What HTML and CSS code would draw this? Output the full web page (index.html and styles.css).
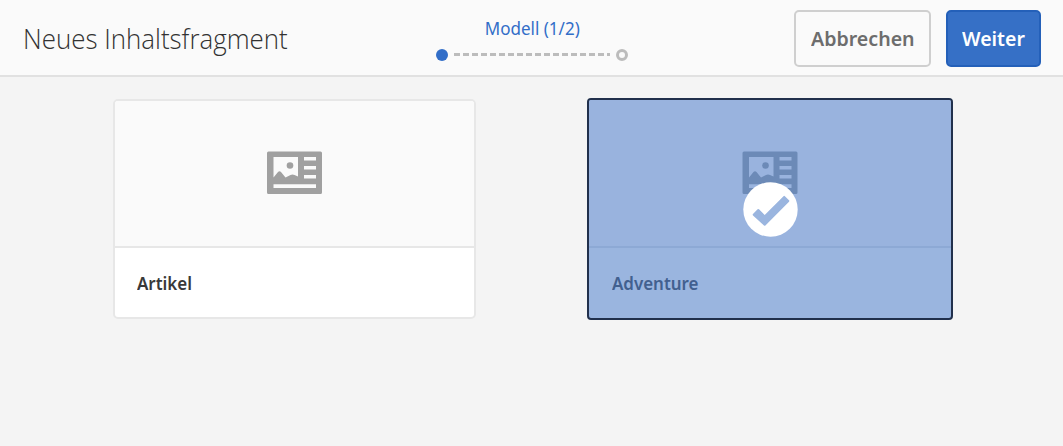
FILE: index.html
```html
<!DOCTYPE html>
<html lang="de">
<head>
<meta charset="utf-8">
<title>Neues Inhaltsfragment</title>
<link rel="stylesheet" href="styles.css">
</head>
<body>
<header class="bar">
  <h1 class="title"><span class="title-text">Neues Inhaltsfragment</span></h1>
  <div class="steps">
    <span class="step-label">Modell (1/2)</span>
    <svg class="track" width="194" height="14" viewBox="0 0 194 14">
      <circle cx="7" cy="7" r="6" fill="#326ec8"/>
      <path d="M19 6.5H175" stroke="#bcbcbc" stroke-width="3" stroke-dasharray="6 3"/>
      <circle cx="187" cy="7" r="4.5" fill="#fafafa" stroke="#bcbcbc" stroke-width="3"/>
    </svg>
  </div>
  <div class="actions">
    <button class="btn cancel"><span class="cancel-text">Abbrechen</span></button>
    <button class="btn next"><span class="next-text">Weiter</span></button>
  </div>
</header>
<main class="models">
  <article class="card">
    <div class="preview">
      <svg class="icon" width="55" height="43" viewBox="0 0 55 43">
        <path fill="currentColor" fill-rule="evenodd" d="M1.5 0.500H53.5Q55 0.500 55 2V41.5Q55 43 53.5 43H1.5Q0 43 0 41.5V2Q0 0.500 1.5 0.500ZM6.5 6V26.5L11 20.9Q12.500 19.500 14 20.900L18.500 26.500L23.500 23.900Q25.500 22.900 27.500 23.900L31 25.500V6ZM37 6V9.500H49V6ZM37 15V18.500H49V15ZM37 24V27.500H49V24ZM6.500 33.300V37H49V33.300Z"/>
        <circle cx="23" cy="14.500" r="3.300" fill="currentColor"/>
      </svg>
    </div>
    <div class="caption"><span class="artikel">Artikel</span></div>
  </article>
  <article class="card selected">
    <div class="preview">
      <svg class="icon" width="56" height="43" viewBox="-0.5 0 56 43">
        <path fill="currentColor" fill-rule="evenodd" d="M1.5 0.500H53.5Q55 0.500 55 2V41.5Q55 43 53.5 43H1.5Q0 43 0 41.5V2Q0 0.500 1.5 0.500ZM6.5 6V26.5L11 20.9Q12.500 19.500 14 20.900L18.500 26.500L23.500 23.900Q25.500 22.900 27.500 23.900L31 25.500V6ZM37 6V9.500H49V6ZM37 15V18.500H49V15ZM37 24V27.500H49V24ZM6.500 33.300V37H49V33.300Z"/>
        <circle cx="23" cy="14.500" r="3.300" fill="currentColor"/>
      </svg>
    </div>
    <div class="caption"><span class="adventure">Adventure</span></div>
    <svg class="check" width="56" height="56" viewBox="0 0 56 56">
      <circle cx="28.500" cy="28.500" r="27.200" fill="#fff"/>
      <path d="M11 33L15.600 28.300Q16.300 27.600 17 28.300L22.700 34L41.500 15.200Q42.200 14.500 42.900 15.200L47 19.300Q47.700 20 47 20.700L23.400 44.500Q22.700 45.200 22 44.500L11 34.400Q10.300 33.700 11 33Z" fill="#9ab5df"/>
    </svg>
  </article>
</main>
</body>
</html>
```
FILE: styles.css
```css
* { box-sizing: border-box; }
body {
  margin: 0;
  height: 446px;
  overflow: hidden;
  background: #f4f4f4;
  font-family: "Noto Sans", "Open Sans", sans-serif;
}
.bar {
  display: grid;
  grid-template-columns: 435px 194px 1fr;
  height: 77px;
  background: #fafafa;
  border-bottom: 2px solid #e1e1e1;
}
.title {
  margin: 0;
  padding: 18px 0 0 23px;
  font: 300 28px/40px "Open Sans", "Noto Sans", sans-serif;
  color: #323232;
}
.title-text, .step-label, .cancel-text, .next-text, .artikel, .adventure {
  display: inline-block;
  white-space: nowrap;
  transform-origin: left center;
}
.title-text { transform: scaleX(.925); }
.steps {
  display: flex;
  flex-direction: column;
  align-items: center;
  padding-top: 15px;
}
.step-label {
  font-size: 18px;
  line-height: 26px;
  color: #326ec8;
  transform: scaleX(.945);
  transform-origin: center;
}
.track { display: block; margin-top: 7px; }
.actions {
  display: flex;
  justify-content: flex-end;
  gap: 15px;
  padding: 10px 22px 0 0;
}
.btn {
  height: 57px;
  padding: 1px 0 0 15px;
  border: 2px solid #cfcfcf;
  border-radius: 5px;
  font: 600 20px/50px "Noto Sans", "Open Sans", sans-serif;
  text-align: left;
}
.cancel { width: 137px; background: #fafafa; color: #6d6d6d; }
.next { width: 95px; background: #3670c6; border-color: #2460b9; color: #fff; padding-left: 14px; }
.cancel-text { transform: scaleX(.98); }
.next-text { transform: scaleX(.975); }
.models {
  display: flex;
  gap: 111px;
  padding: 21px 0 0 113px;
}
.card {
  position: relative;
  display: flex;
  flex-direction: column;
  width: 363px;
  height: 220px;
  margin-top: 1px;
  background: #fff;
  border: 2px solid #e7e7e7;
  border-radius: 5px;
  overflow: hidden;
}
.preview {
  height: 147px;
  padding: 50px 0 0 152px;
  background: #fafafa;
  border-bottom: 2px solid #e7e7e7;
  color: #a0a0a0;
}
.icon { display: block; }
.caption {
  padding: 21px 0 0 22px;
  font-size: 18px;
  line-height: 28px;
  font-weight: 600;
  color: #393939;
}
.artikel, .adventure { transform: scaleX(.94); }
.selected {
  width: 366px;
  height: 222px;
  margin-top: 0;
  background: #9ab5df;
  border-color: #21304c;
  border-radius: 4px;
}
.selected .preview {
  height: 148px;
  padding: 51px 0 0 153px;
  background: #99b3de;
  border-color: #8da9d5;
  color: #6c8ab7;
}
.selected .caption { padding-left: 23px; color: #42608f; }
.check { position: absolute; left: 153px; top: 81px; }
```
